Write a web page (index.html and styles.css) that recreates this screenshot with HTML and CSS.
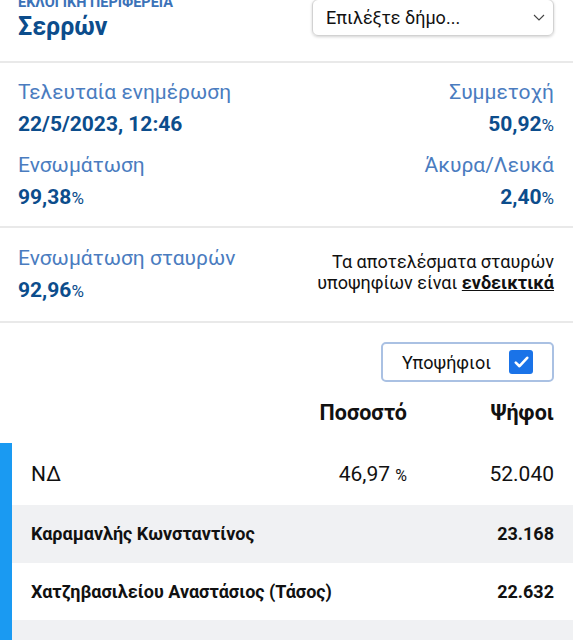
FILE: index.html
```html
<!DOCTYPE html>
<html lang="el">
<head>
<meta charset="UTF-8">
<meta name="viewport" content="width=device-width, initial-scale=1.0">
<title>Σερρών</title>
<link rel="stylesheet" href="styles.css">
</head>
<body>
<header class="top">
  <div class="region">
    <p class="region-label">ΕΚΛΟΓΙΚΗ ΠΕΡΙΦΕΡΕΙΑ</p>
    <h1>Σερρών</h1>
  </div>
  <div class="select">
    <span>Επιλέξτε δήμο...</span>
    <svg width="12" height="7" viewBox="0 0 12 7"><path d="M1 1l5 5 5-5" fill="none" stroke="#444" stroke-width="1.1"/></svg>
  </div>
</header>
<section class="stats">
  <div class="stat">
    <div class="stat-label">Τελευταία ενημέρωση</div>
    <div class="stat-value">22/5/2023, 12:46</div>
  </div>
  <div class="stat right">
    <div class="stat-label">Συμμετοχή</div>
    <div class="stat-value">50,92<small>%</small></div>
  </div>
  <div class="stat">
    <div class="stat-label">Ενσωμάτωση</div>
    <div class="stat-value">99,38<small>%</small></div>
  </div>
  <div class="stat right">
    <div class="stat-label">Άκυρα/Λευκά</div>
    <div class="stat-value">2,40<small>%</small></div>
  </div>
</section>
<section class="stats cross">
  <div class="stat">
    <div class="stat-label">Ενσωμάτωση σταυρών</div>
    <div class="stat-value">92,96<small>%</small></div>
  </div>
  <p class="note">Τα αποτελέσματα σταυρών<br>υποψηφίων είναι <b>ενδεικτικά</b></p>
</section>
<div class="toggle-row">
  <label class="toggle">Υποψήφιοι
    <span class="check"><svg width="15" height="12" viewBox="0 0 15 12"><path d="M1.8 6.6l3.7 3.6 7.7-8.4" fill="none" stroke="#fff" stroke-width="2.6" stroke-linecap="round" stroke-linejoin="round"/></svg></span>
  </label>
</div>
<div class="results">
  <div class="res-head">
    <span class="col-name"></span>
    <span class="col-pct">Ποσοστό</span>
    <span class="col-votes">Ψήφοι</span>
  </div>
  <div class="party">
    <div class="party-row">
      <span class="col-name">ΝΔ</span>
      <span class="col-pct">46,97 <small>%</small></span>
      <span class="col-votes">52.040</span>
    </div>
    <div class="cand-row alt">
      <span class="col-name">Καραμανλής Κωνσταντίνος</span>
      <span class="col-votes">23.168</span>
    </div>
    <div class="cand-row">
      <span class="col-name">Χατζηβασιλείου Αναστάσιος (Τάσος)</span>
      <span class="col-votes">22.632</span>
    </div>
    <div class="cand-row alt">
      <span class="col-name">&nbsp;</span>
      <span class="col-votes"></span>
    </div>
  </div>
</div>
</body>
</html>
```

FILE: styles.css
```css
body { margin:0; font-family:Roboto,'Noto Sans',sans-serif; background:#fff; color:#111; }
.top { display:flex; justify-content:space-between; align-items:flex-start; padding:0 19px 0 18px; margin-top:-6px; height:67px; border-bottom:2px solid #e9e9e9; }
.region-label { margin:0; font-size:14.5px; font-weight:700; color:#3b72b8; line-height:17px; }
h1 { margin:0; font-size:25px; font-weight:700; color:#0c4d8c; line-height:32px; }
.select { display:flex; align-items:center; justify-content:space-between; box-sizing:border-box; width:242px; height:37px; margin-top:5px; padding:0 8px 0 13px; border:1px solid #d2d2d2; border-radius:6px; box-shadow:0 1px 3px rgba(0,0,0,0.18); font-size:18px; color:#111; }
.stats { display:grid; grid-template-columns:1fr 1fr; row-gap:14px; padding:16px 19px 15px 18px; border-bottom:2px solid #e9e9e9; }
.stat-label { font-size:21px; color:#4a7cbf; line-height:26px; }
.stat-value { font-size:21px; font-weight:700; color:#0c4d8c; line-height:26px; margin-top:6px; }
.stat-value small { font-size:17px; font-weight:400; }
.right { text-align:right; }
.cross { grid-template-columns:auto 1fr; padding:17px 19px 17px 18px; }
.note { margin:6px 0 0; text-align:right; font-size:18px; line-height:21px; color:#111; }
.note b { text-decoration:underline; }
.toggle-row { display:flex; justify-content:flex-end; padding:19px 19px 0; }
.toggle { display:flex; align-items:center; gap:18px; box-sizing:border-box; height:40px; padding:0 19px; border:2px solid #aac1e3; border-radius:5px; font-size:18px; }
.check { display:flex; align-items:center; justify-content:center; width:24px; height:24px; background:#1a73e8; border-radius:3px; }
.res-head, .party-row, .cand-row { display:flex; align-items:center; padding:0 19px; }
.res-head { height:61px; font-size:21.5px; font-weight:700; padding-left:31px; }
.col-name { flex:1; }
.col-pct { width:130px; text-align:right; }
.col-votes { width:147px; text-align:right; }
.party { border-left:12px solid #1a9af2; }
.party-row { height:62px; font-size:21px; }
.party-row small { font-size:16px; }
.cand-row { height:57.5px; font-size:18px; font-weight:700; }
.alt { background:#f0f1f3; }
```
